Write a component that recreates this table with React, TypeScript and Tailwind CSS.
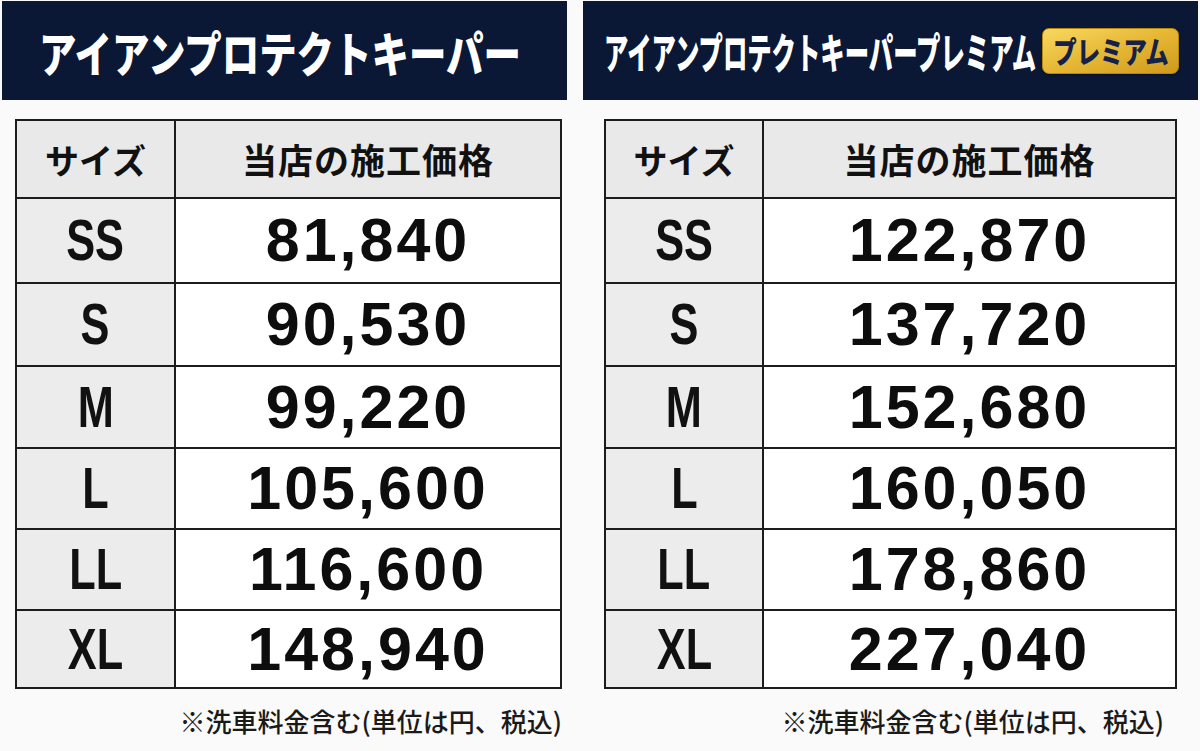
import React from 'react';

const jp = "font-['Noto_Sans_CJK_JP','Noto_Sans',sans-serif]";
const latin = "font-['Liberation_Sans',Arial,sans-serif]";

interface PriceRow {
  size: string;
  price: string;
}

const standardPrices: PriceRow[] = [
  { size: 'SS', price: '81,840' },
  { size: 'S', price: '90,530' },
  { size: 'M', price: '99,220' },
  { size: 'L', price: '105,600' },
  { size: 'LL', price: '116,600' },
  { size: 'XL', price: '148,940' },
];

const premiumPrices: PriceRow[] = [
  { size: 'SS', price: '122,870' },
  { size: 'S', price: '137,720' },
  { size: 'M', price: '152,680' },
  { size: 'L', price: '160,050' },
  { size: 'LL', price: '178,860' },
  { size: 'XL', price: '227,040' },
];

const rowHeights = ['h-[85px]', 'h-[83px]', 'h-[82px]', 'h-[81px]', 'h-[81px]', 'h-[78px]'];

const PriceTable: React.FC<{ rows: PriceRow[]; sizeCol: string; width: string }> = ({ rows, sizeCol, width }) => (
  <table className={`${width} border-collapse border-2 border-[#1c1c1c]`}>
    <thead>
      <tr className="h-[78px] bg-[#e9e9e9]">
        <th className={`${sizeCol} border-2 border-[#1c1c1c] p-0 ${jp} text-[34px] font-bold text-[#111]`}>
          サイズ
        </th>
        <th className={`border-2 border-[#1c1c1c] p-0 ${jp} text-[35px] font-bold tracking-[1px] text-[#111]`}>
          当店の施工価格
        </th>
      </tr>
    </thead>
    <tbody>
      {rows.map((row, i) => (
        <tr key={row.size} className={rowHeights[i]}>
          <td className="border-2 border-[#1c1c1c] bg-[#ececec] p-0 text-center">
            <span className={`inline-block scale-x-[0.76] ${latin} text-[57px] font-bold leading-none text-[#111]`}>
              {row.size}
            </span>
          </td>
          <td className="border-2 border-[#1c1c1c] bg-white p-0 text-center">
            <span className={`${latin} text-[61px] font-bold leading-none tracking-[3px] text-[#0d0d0d]`}>
              {row.price}
            </span>
          </td>
        </tr>
      ))}
    </tbody>
  </table>
);

const Footnote: React.FC = () => (
  <p className={`${jp} text-[26px] font-medium leading-none text-[#1a1a1a]`}>
    ※洗車料金含む(単位は円、税込)
  </p>
);

export default function App() {
  return (
    <div className="h-[751px] w-[1200px] overflow-hidden bg-[#fafafa] pl-[2px] pt-[1px]">
      <div className="flex gap-[16px]">
        {/* スタンダード */}
        <div className="w-[565px]">
          <div className="flex h-[99px] items-center bg-[#0a1836] pl-[37px]">
            <span className={`inline-block origin-left scale-x-[0.78] whitespace-nowrap ${jp} text-[48px] font-black text-white`}>
              アイアンプロテクトキーパー
            </span>
          </div>
          <div className="ml-[13px] mt-[19px]">
            <PriceTable rows={standardPrices} sizeCol="w-[159px]" width="w-[547px]" />
          </div>
          <div className="mt-[19px] flex w-[560px] justify-end">
            <Footnote />
          </div>
        </div>

        {/* プレミアム */}
        <div className="w-[615px]">
          <div className="flex h-[99px] items-center bg-[#0a1836] pl-[21px]">
            <span className={`inline-block w-[432px] origin-left scale-x-[0.58] whitespace-nowrap ${jp} text-[42px] font-black text-white`}>
              アイアンプロテクトキーパープレミアム
            </span>
            <span className="ml-[6px] flex h-[46px] w-[137px] items-center justify-center rounded-[7px] border border-[#b8860b] bg-gradient-to-br from-[#f8d860] via-[#e6b734] to-[#cf9a1c] shadow-[0_1px_2px_rgba(0,0,0,0.4)]">
              <span className={`inline-block scale-x-[0.78] whitespace-nowrap ${jp} text-[30px] font-black text-[#14214a]`}>
                プレミアム
              </span>
            </span>
          </div>
          <div className="ml-[21px] mt-[19px]">
            <PriceTable rows={premiumPrices} sizeCol="w-[158px]" width="w-[573px]" />
          </div>
          <div className="mt-[19px] flex w-[581px] justify-end">
            <Footnote />
          </div>
        </div>
      </div>
    </div>
  );
}
